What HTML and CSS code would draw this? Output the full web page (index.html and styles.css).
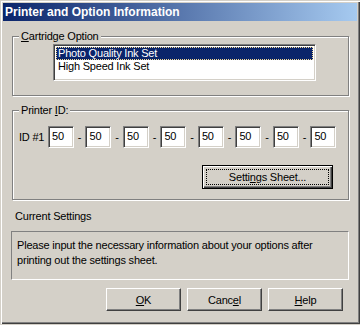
FILE: index.html
```html
<!DOCTYPE html>
<html>
  <head>
    <meta charset="UTF-8" />
    <title>Printer and Option Information</title>
    <link rel="stylesheet" href="styles.css">
  </head>
  <body>
    <div class="window">
      <div class="titlebar">Printer and Option Information</div>
      <div class="content">
        <div class="group group-cartridge">
          <div class="group-label"><u>C</u>artridge Option</div>
          <div class="listbox">
            <div class="item selected">Photo Quality Ink Set</div>
            <div class="item">High Speed Ink Set</div>
          </div>
        </div>

        <div class="group group-printer">
          <div class="group-label">Printer <u>I</u>D:</div>
          <div class="id-row">
            <span class="id-label">ID #1</span>
            <div class="id-fields">
              <div class="edit">50</div><span class="dash">-</span>
              <div class="edit">50</div><span class="dash">-</span>
              <div class="edit">50</div><span class="dash">-</span>
              <div class="edit">50</div><span class="dash">-</span>
              <div class="edit">50</div><span class="dash">-</span>
              <div class="edit">50</div><span class="dash">-</span>
              <div class="edit">50</div><span class="dash">-</span>
              <div class="edit">50</div>
            </div>
          </div>
          <div class="sheet-row">
            <button class="btn btn-default"><span class="focus">Setti<u>n</u>gs Sheet...</span></button>
          </div>
        </div>

        <div class="current-label">Current Settings</div>
        <div class="static-box">
          Please input the necessary information about your options after
          printing out the settings sheet.
        </div>

        <div class="buttons">
          <button class="btn"><u>O</u>K</button>
          <button class="btn">Canc<u>e</u>l</button>
          <button class="btn"><u>H</u>elp</button>
        </div>
      </div>
    </div>
  </body>
</html>
```

FILE: styles.css
```css
body {
  margin: 0;
  background: #d4d0c8;
  font-family: "Liberation Sans", Arial, sans-serif;
  font-size: 11px;
  letter-spacing: -0.2px;
  color: #000;
}

.window {
  box-sizing: border-box;
  width: 360px;
  height: 324px;
  padding: 3px;
  background: #d4d0c8;
  box-shadow: inset 1px 1px #d4d0c8, inset 2px 2px #fff,
    inset -1px -1px #404040, inset -2px -2px #808080;
}

.titlebar {
  height: 18px;
  line-height: 18px;
  padding-left: 2px;
  color: #fff;
  font-weight: bold;
  font-size: 12px;
  letter-spacing: 0;
  background: linear-gradient(to right, #0a246a, #a6caf0);
}

.content {
  padding: 0 8px 0 9px;
}

.group {
  border: 1px solid #808080;
  box-shadow: inset 1px 1px #fff, 1px 1px #fff;
}

.group-label {
  width: fit-content;
  margin: -7px 0 0 6px;
  padding: 0 2px;
  line-height: 13px;
  background: #d4d0c8;
}

.group-cartridge {
  margin-top: 15px;
  height: 58px;
}

.listbox {
  box-sizing: border-box;
  width: 263px;
  height: 37px;
  margin: 1px 0 0 40px;
  padding: 2px;
  background: #fff;
  border: 1px solid;
  border-color: #808080 #fff #fff #808080;
  box-shadow: inset 1px 1px #404040, inset -1px -1px #d4d0c8;
}

.item {
  height: 13px;
  line-height: 13px;
  padding-left: 2px;
}

.item.selected {
  background: #0a246a;
  color: #fff;
  outline: 1px dotted #f5db95;
  outline-offset: -1px;
}

.group-printer {
  margin-top: 14px;
  height: 88px;
}

.id-row {
  display: flex;
  align-items: center;
  margin: 9px 0 0 6px;
}

.id-label {
  width: 29px;
}

.id-fields {
  display: flex;
  align-items: center;
  justify-content: space-between;
  width: 288px;
}

.edit {
  box-sizing: border-box;
  width: 26px;
  height: 22px;
  line-height: 18px;
  padding-left: 3px;
  background: #fff;
  border: 1px solid;
  border-color: #808080 #fff #fff #808080;
  box-shadow: inset 1px 1px #404040, inset -1px -1px #d4d0c8;
}

.dash {
  width: 12px;
  text-align: center;
}

.sheet-row {
  display: flex;
  justify-content: flex-end;
  margin: 17px 15px 0 0;
}

.btn {
  box-sizing: border-box;
  width: 75px;
  height: 23px;
  padding: 0;
  font-family: inherit;
  font-size: 11px;
  letter-spacing: -0.2px;
  color: #000;
  background: #d4d0c8;
  border: 1px solid;
  border-color: #fff #404040 #404040 #fff;
  box-shadow: inset -1px -1px #808080, inset 1px 1px #d4d0c8;
}

.btn-default {
  width: 131px;
  height: 24px;
  padding: 3px;
  border: 1px solid #000;
  box-shadow: inset 1px 1px #fff, inset -1px -1px #404040,
    inset -2px -2px #808080;
}

.btn-default .focus {
  display: block;
  height: 100%;
  box-sizing: border-box;
  line-height: 14px;
  border: 1px dotted #000;
}

.current-label {
  margin: 10px 0 0 3px;
  line-height: 13px;
}

.static-box {
  box-sizing: border-box;
  height: 49px;
  margin: 8px 0 0 -1px;
  width: 338px;
  padding: 6px 5px;
  line-height: 15px;
  border: 1px solid;
  border-color: #808080 #fff #fff #808080;
}

.buttons {
  display: flex;
  justify-content: flex-end;
  gap: 6px;
  margin: 8px 6px 0 0;
}
```
